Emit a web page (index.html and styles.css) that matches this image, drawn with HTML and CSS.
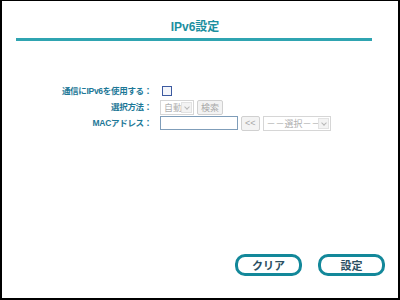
FILE: index.html
```html
<!DOCTYPE html>
<html lang="ja">
<head>
    <meta charset="UTF-8">
    <title>IPv6設定</title>
    <link rel="stylesheet" href="styles.css">
</head>
<body>
    <div class="frame">
        <div class="page-head">
            <h1>IPv6設定</h1>
        </div>

        <div class="settings">
            <label class="field-label" for="useIpv6">通信にIPv6を使用する：</label>
            <div class="field">
                <span class="check" id="useIpv6"></span>
            </div>

            <span class="field-label">選択方法：</span>
            <div class="field">
                <span class="select disabled sel-auto">自動<span class="arrow"></span></span>
                <span class="btn-small disabled">検索</span>
            </div>

            <span class="field-label">MACアドレス：</span>
            <div class="field">
                <span class="text-input"></span>
                <span class="btn-small disabled">&lt;&lt;</span>
                <span class="select disabled sel-mac">－－選択－－<span class="arrow"></span></span>
            </div>
        </div>

        <div class="actions">
            <button class="btn-round">クリア</button>
            <button class="btn-round">設定</button>
        </div>
    </div>
</body>
</html>
```

FILE: styles.css
```css
* {
    box-sizing: border-box;
}

body {
    margin: 0;
    width: 400px;
    height: 300px;
    background-color: #fff;
    font-family: 'Liberation Sans', 'Noto Sans CJK JP', sans-serif;
}

.frame {
    width: 400px;
    height: 300px;
    border-style: solid;
    border-color: #000;
    border-width: 1px 2px 2px 2px;
    display: flex;
    flex-direction: column;
}

.page-head {
    margin: 0 26px 0 14px;
    padding-top: 18px;
    border-bottom: 3px solid #2fa4b1;
    height: 40px;
}

.page-head h1 {
    margin: 0;
    text-align: center;
    font-size: 12px;
    font-weight: bold;
    color: #1b8fa0;
    line-height: 16px;
    padding-left: 2px;
}

.settings {
    display: grid;
    grid-template-columns: 150px auto;
    column-gap: 8px;
    row-gap: 2px;
    margin-top: 43px;
    align-items: center;
}

.field-label {
    text-align: right;
    font-size: 8.5px;
    font-weight: bold;
    letter-spacing: -0.3px;
    color: #1d7897;
    line-height: 14px;
}

.field {
    display: flex;
    align-items: center;
    gap: 3px;
    height: 14px;
}

.check {
    width: 10px;
    height: 10px;
    border: 1px solid #3c5aa0;
    background: #f4f6fb;
    margin-left: 2px;
}

.select {
    position: relative;
    display: inline-flex;
    align-items: center;
    height: 15px;
    border: 1px solid #d6d6d6;
    background: #fff;
    font-size: 9px;
    color: #b0b0b0;
    padding-left: 3px;
}

.sel-auto {
    width: 34px;
}

.sel-mac {
    width: 68px;
}

.arrow {
    position: absolute;
    right: 1px;
    top: 1px;
    width: 11px;
    height: 11px;
    border: 1px solid #e2e2e2;
    background: #f3f3f3;
}

.arrow::after {
    content: "";
    position: absolute;
    left: 2px;
    top: 1px;
    width: 3px;
    height: 3px;
    border-right: 1px solid #b8b8b8;
    border-bottom: 1px solid #b8b8b8;
    transform: translate(1px, 1px) rotate(45deg);
}

.btn-small {
    display: inline-flex;
    align-items: center;
    justify-content: center;
    height: 15px;
    padding: 0 3px;
    border: 1px solid #d0d0d0;
    border-radius: 2px;
    background: #f3f3f3;
    font-size: 9px;
    color: #a8a8a8;
}

.text-input {
    width: 78px;
    height: 14px;
    border: 1px solid #7f9db9;
    background: #fff;
}

.actions {
    margin-top: auto;
    margin-bottom: 22px;
    display: flex;
    justify-content: flex-end;
    gap: 16px;
    padding-right: 13px;
}

.btn-round {
    width: 67px;
    height: 22px;
    border: 3px solid #13889a;
    border-radius: 10px;
    background: #fff;
    font-family: 'Liberation Sans', 'Noto Sans CJK JP', sans-serif;
    font-size: 11px;
    font-weight: bold;
    color: #2b4f62;
    padding: 0;
    cursor: pointer;
}
```
